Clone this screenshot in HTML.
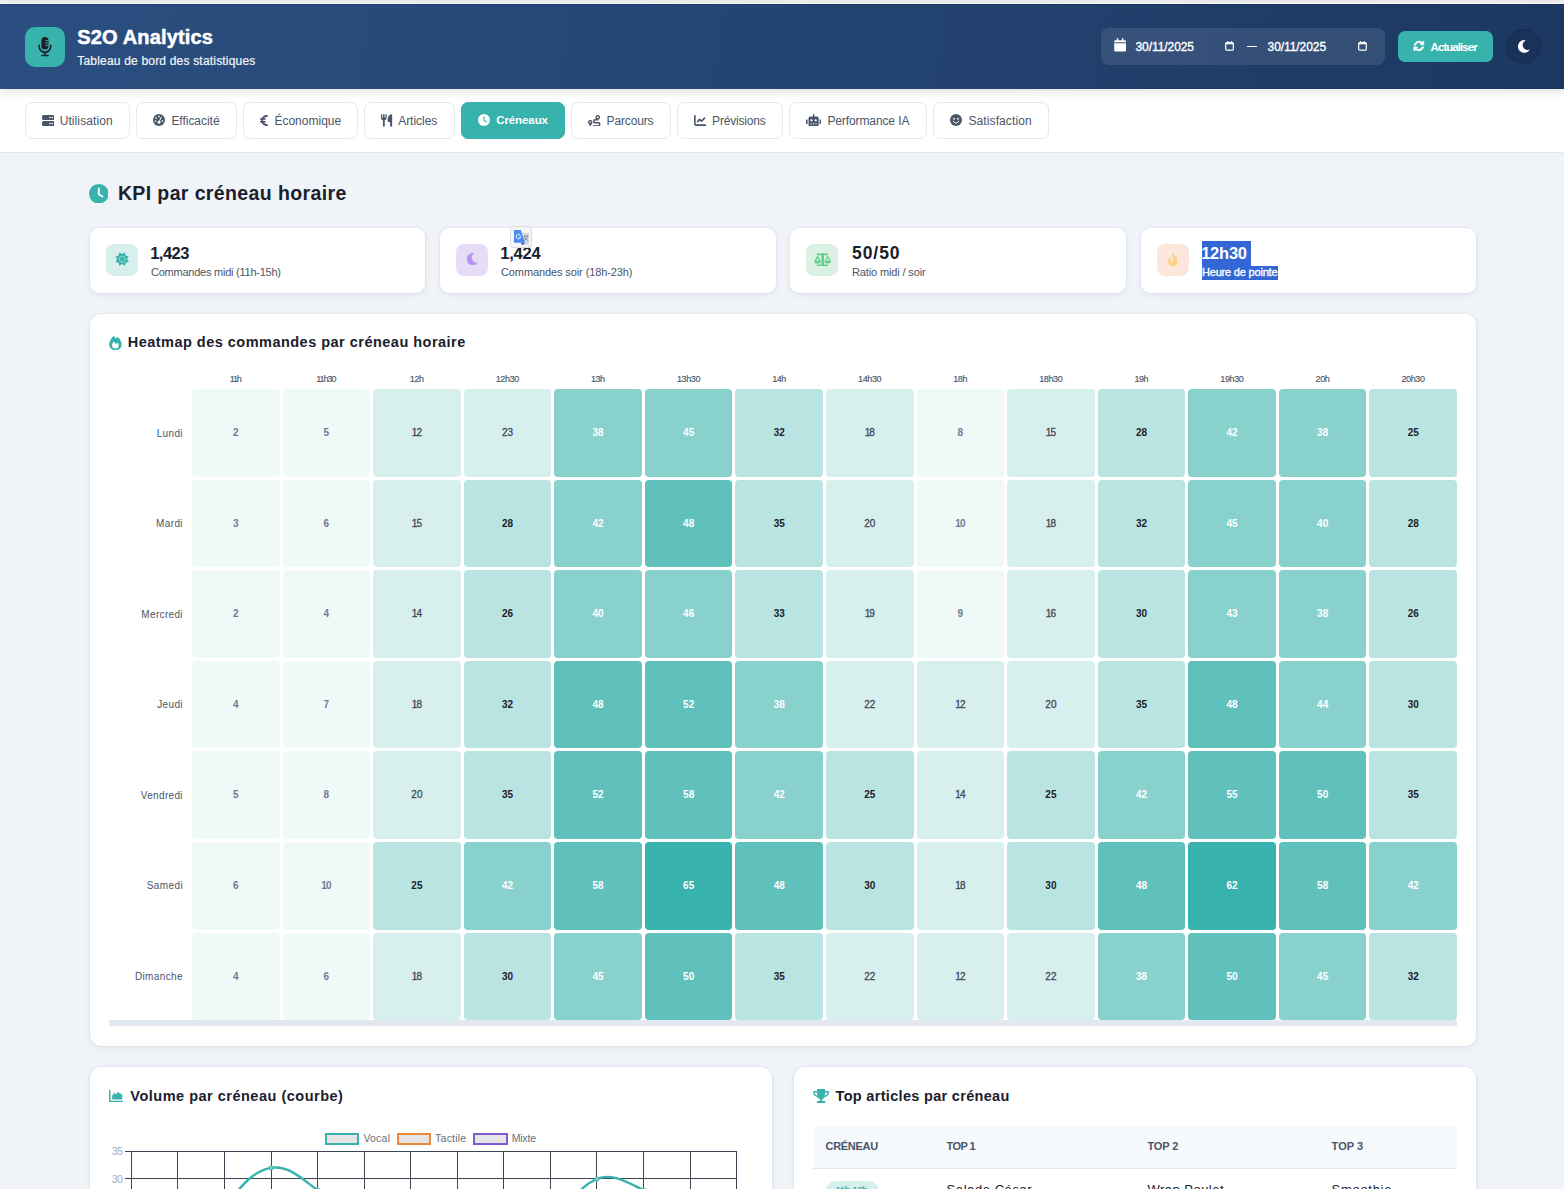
<!DOCTYPE html>
<html lang="fr">
<head>
<meta charset="utf-8">
<title>S2O Analytics</title>
<style>
*{box-sizing:border-box;margin:0;padding:0}
html,body{width:1564px;height:1189px;overflow:hidden}
body{font-family:"Liberation Sans",sans-serif;background:#f0f4f8;color:#1a202c;position:relative}
.abs{position:absolute}
.t{position:absolute;white-space:nowrap;line-height:1}
#topstrip{left:0;top:0;width:1564px;height:4px;background:linear-gradient(#ebebeb 0%,#f3f3f3 50%,#ffffff 88%)}
#header{left:0;top:4px;width:1564px;height:85px;border-top:1px solid rgba(10,20,60,.18);background:linear-gradient(100deg,#2b4f80 0%,#264878 35%,#1c3862 100%);box-shadow:0 2px 10px rgba(0,0,0,.14)}
#nav{left:0;top:89px;width:1564px;height:64px;background:#fff;border-bottom:1px solid #e2e8f0}
.logo{left:25px;top:27px;width:40px;height:40px;border-radius:10px;background:#38b2ac}
.nb{position:absolute;top:102px;height:37px;border:1px solid #e2e8f0;border-radius:7px;background:#fff}
.nb.act{background:#38b2ac;border-color:#38b2ac}
.card{position:absolute;background:#fff;border-radius:11px;box-shadow:0 2px 6px rgba(30,50,90,.07),0 0 0 1px rgba(214,222,236,.38)}
.ic{position:absolute;width:32px;height:32px;border-radius:8px}
</style>
</head>
<body>
<div id="topstrip" class="abs"></div>
<div id="nav" class="abs"></div>
<div id="header" class="abs"></div>
<div class="abs logo"></div>
<div class="t" style="left:77.30px;top:27.13px;font-size:20px;font-weight:700;color:#ffffff;letter-spacing:0.145px;-webkit-text-stroke:0.5px #fff;">S2O Analytics</div>
<div class="t" style="left:77.30px;top:55.44px;font-size:12px;font-weight:400;color:#f1f5f9;letter-spacing:0.190px;-webkit-text-stroke:0.2px #f1f5f9;">Tableau de bord des statistiques</div>
<svg class="abs" style="left:37.6px;top:37px" width="14" height="20" viewBox="0 0 14 20"><rect x="3.400" y="0.100" width="7.100" height="12.400" rx="3.550" fill="#1a202c"/><path d="M1.200 8.200v1.400a5.750 5.750 0 0 0 11.500 0V8.200" fill="none" stroke="#1a202c" stroke-width="1.600" stroke-linecap="round"/><path d="M6.950 15.500v3M3.900 18.600h6.200" stroke="#1a202c" stroke-width="1.500" stroke-linecap="round"/><path d="M7.200 3.700h3.300M7.200 6h3.300M7.200 8.300h3.300" stroke="#38b2ac" stroke-width="0.900"/></svg>
<div class="abs" style="left:1101px;top:28px;width:284px;height:37px;border-radius:8px;background:rgba(255,255,255,.10)"></div>
<svg class="abs" style="left:1113.9px;top:38.200px" width="12.200" height="13.600" viewBox="0 0 13 14.5"><path d="M3 0.3h1.6v2H8.4v-2H10v2h1.4a1.4 1.4 0 0 1 1.4 1.4V13a1.4 1.4 0 0 1-1.4 1.4H1.6A1.4 1.4 0 0 1 .2 13V3.7A1.4 1.4 0 0 1 1.6 2.3H3z" fill="#fff"/><rect x="0.2" y="4.6" width="12.6" height="1" fill="#354f78"/></svg>
<div class="t" style="left:1135.50px;top:40.84px;font-size:12px;font-weight:400;color:#ffffff;letter-spacing:-0.074px;-webkit-text-stroke:0.35px #fff;">30/11/2025</div>
<div class="t" style="left:1267.60px;top:40.84px;font-size:12px;font-weight:400;color:#ffffff;letter-spacing:-0.074px;-webkit-text-stroke:0.35px #fff;">30/11/2025</div>
<svg class="abs" style="left:1225px;top:41.200px" width="9" height="10" viewBox="0 0 9 10"><rect x="0.7" y="1.6" width="7.6" height="7.6" rx="1" fill="none" stroke="#fff" stroke-width="1.2"/><rect x="0.7" y="1.6" width="7.6" height="1.700" fill="#fff"/><rect x="2" y="0.2" width="1.2" height="2" fill="#fff"/><rect x="5.8" y="0.2" width="1.2" height="2" fill="#fff"/></svg>
<svg class="abs" style="left:1357.5px;top:41.200px" width="9" height="10" viewBox="0 0 9 10"><rect x="0.7" y="1.6" width="7.6" height="7.6" rx="1" fill="none" stroke="#fff" stroke-width="1.2"/><rect x="0.7" y="1.6" width="7.6" height="1.700" fill="#fff"/><rect x="2" y="0.2" width="1.2" height="2" fill="#fff"/><rect x="5.8" y="0.2" width="1.2" height="2" fill="#fff"/></svg>
<div class="abs" style="left:1246.5px;top:46px;width:10.5px;height:1.2px;background:#fff"></div>
<div class="abs" style="left:1398px;top:31px;width:95px;height:31px;border-radius:7px;background:#38b2ac"></div>
<svg class="abs" style="left:1412.8px;top:40px" width="12" height="12" viewBox="-20 -20 552 552"><path fill="#fff" stroke="#fff" stroke-width="34" stroke-linejoin="round" d="M105 203C135 118 226 73 311 103c30 11 55 29 74 53l-49 0c-13 0-24 11-24 24s11 24 24 24H456c13 0 24-11 24-24V56c0-13-11-24-24-24s-24 11-24 24v62C406 88 372 63 332 49 213 7 82 70 40 189c-6 17 3 35 19 41s35-3 41-19zM39 289c-4 1-8 3-11 7s-6 8-7 12c-.3 1-.5 2-.7 4-.3 2-.5 4-.5 6V456c0 13 11 24 24 24s24-11 24-24V394c26 30 60 55 100 69 119 42 250-21 292-140 6-17-3-35-19-41s-35 3-41 19c-30 85-121 130-206 100-30-11-55-29-74-53h48c13 0 24-11 24-24s-11-24-24-24H48c-3 0-6 .4-9 1z"/></svg>
<div class="t" style="left:1430.60px;top:41.68px;font-size:11.5px;font-weight:700;color:#ffffff;letter-spacing:-0.945px;">Actualiser</div>
<div class="abs" style="left:1506px;top:29px;width:35px;height:35px;border-radius:50%;background:#1a3158;border:1px solid #172d4f"></div>
<svg class="abs" style="left:1517.5px;top:40px" width="12" height="13" viewBox="0 0 12 13"><path d="M7.800 0.200A6.400 6.400 0 1 0 11.900 9.600 4.800 4.800 0 0 1 7.800 0.200z" fill="#fff"/></svg>
<div class="nb" style="left:25px;width:104.5px"></div>
<div class="t" style="left:59.70px;top:115.14px;font-size:12px;font-weight:400;color:#4a5568;letter-spacing:0.088px;">Utilisation</div>
<div class="nb" style="left:136.2px;width:100.5px"></div>
<div class="t" style="left:171.40px;top:115.14px;font-size:12px;font-weight:400;color:#4a5568;letter-spacing:-0.030px;">Efficacité</div>
<div class="nb" style="left:243.4px;width:114.6px"></div>
<div class="t" style="left:274.40px;top:115.14px;font-size:12px;font-weight:400;color:#4a5568;letter-spacing:0.010px;">Économique</div>
<div class="nb" style="left:364px;width:91px"></div>
<div class="t" style="left:398.20px;top:115.14px;font-size:12px;font-weight:400;color:#4a5568;letter-spacing:-0.034px;">Articles</div>
<div class="nb act" style="left:461px;width:104px"></div>
<div class="t" style="left:496.20px;top:115.38px;font-size:11.5px;font-weight:700;color:#ffffff;letter-spacing:-0.088px;">Créneaux</div>
<div class="nb" style="left:571px;width:99.5px"></div>
<div class="t" style="left:606.60px;top:115.14px;font-size:12px;font-weight:400;color:#4a5568;letter-spacing:-0.160px;">Parcours</div>
<div class="nb" style="left:677.2px;width:105.5px"></div>
<div class="t" style="left:712.10px;top:115.14px;font-size:12px;font-weight:400;color:#4a5568;letter-spacing:-0.184px;">Prévisions</div>
<div class="nb" style="left:789.2px;width:137.39999999999998px"></div>
<div class="t" style="left:827.40px;top:115.14px;font-size:12px;font-weight:400;color:#4a5568;letter-spacing:-0.105px;">Performance IA</div>
<div class="nb" style="left:933.3px;width:115.5px"></div>
<div class="t" style="left:968.50px;top:115.14px;font-size:12px;font-weight:400;color:#4a5568;letter-spacing:0.097px;">Satisfaction</div>
<svg class="abs" style="left:41.5px;top:115px" width="12.5" height="11" viewBox="0 0 25 22" preserveAspectRatio="none"><rect x="0" y="0" width="25" height="10" rx="3" fill="#4a5568"/><rect x="0" y="12" width="25" height="10" rx="3" fill="#4a5568"/><circle cx="16" cy="5" r="1.6" fill="#fff"/><circle cx="20.5" cy="5" r="1.6" fill="#fff"/><circle cx="16" cy="17" r="1.6" fill="#fff"/><circle cx="20.5" cy="17" r="1.6" fill="#fff"/></svg>
<svg class="abs" style="left:153.2px;top:114.4px" width="12" height="12" viewBox="0 0 24 24" preserveAspectRatio="none"><circle cx="12" cy="12" r="12" fill="#4a5568"/><circle cx="12" cy="5" r="1.7" fill="#fff"/><circle cx="6" cy="8" r="1.7" fill="#fff"/><circle cx="5" cy="14" r="1.7" fill="#fff"/><circle cx="19" cy="14" r="1.7" fill="#fff"/><path d="M16.5 6.5L12.5 15" stroke="#fff" stroke-width="2" stroke-linecap="round"/><circle cx="12" cy="16.5" r="3" fill="#fff"/></svg>
<svg class="abs" style="left:260.2px;top:115px" width="8" height="11" viewBox="0 0 16 22" preserveAspectRatio="none"><path d="M15.500 2.300A9.200 9.200 0 0 0 4.200 11 9.200 9.200 0 0 0 15.500 19.700" fill="none" stroke="#4a5568" stroke-width="3.800"/><path d="M0 8.200h11.500M0 13.600h11.500" stroke="#4a5568" stroke-width="3"/></svg>
<svg class="abs" style="left:381.2px;top:114.2px" width="11.4" height="12.5" viewBox="0 0 22.8 25" preserveAspectRatio="none"><path d="M0 0.500v7.500a4.500 4.500 0 0 0 3.900 4.400V25h3.600V12.400A4.500 4.500 0 0 0 11.400 8V0.500H9V7H7.200V0.500H4.200V7H2.400V0.500z" fill="#4a5568"/><path d="M22.300 0.300c-5 0-8.800 4-8.800 9.500v6h4.800v9.200h4z" fill="#4a5568"/></svg>
<svg class="abs" style="left:478px;top:114.4px" width="12" height="12" viewBox="0 0 24 24" preserveAspectRatio="none"><circle cx="12" cy="12" r="12" fill="#fff"/><path d="M12 5.500V12.500L16.500 15.500" fill="none" stroke="#38b2ac" stroke-width="2.400" stroke-linecap="round"/></svg>
<svg class="abs" style="left:588.2px;top:114.8px" width="12.5" height="11.5" viewBox="0 0 25 23" preserveAspectRatio="none"><circle cx="4.500" cy="14.500" r="4.300" fill="#4a5568"/><path d="M4.500 23L0.800 16.500h7.400z" fill="#4a5568"/><circle cx="4.500" cy="14.500" r="1.600" fill="#fff"/><circle cx="19.500" cy="4.600" r="3.300" fill="none" stroke="#4a5568" stroke-width="2.800"/><path d="M19.500 9.500H14.500a3.100 3.100 0 0 0 0 6.200h6a3.100 3.100 0 0 1 0 6.200H11" fill="none" stroke="#4a5568" stroke-width="3" stroke-linecap="round"/></svg>
<svg class="abs" style="left:694.2px;top:115px" width="12" height="11" viewBox="0 0 24 22" preserveAspectRatio="none"><path d="M1.700 1.200v16.800a2.300 2.300 0 0 0 2.300 2.300H22.800" fill="none" stroke="#4a5568" stroke-width="3.200" stroke-linecap="round"/><path d="M7 13.500L11.200 8.800l3.800 3.600L21 6.200" fill="none" stroke="#4a5568" stroke-width="3.200" stroke-linecap="round" stroke-linejoin="round"/></svg>
<svg class="abs" style="left:806.2px;top:113.6px" width="15.2" height="12.6" viewBox="0 0 30 25" preserveAspectRatio="none"><rect x="13.800" y="0" width="2.600" height="6" fill="#4a5568"/><rect x="5" y="5" width="20" height="19.500" rx="3.500" fill="#4a5568"/><rect x="0" y="11" width="3.200" height="9" rx="1" fill="#4a5568"/><rect x="26.800" y="11" width="3.200" height="9" rx="1" fill="#4a5568"/><circle cx="10.800" cy="12.500" r="2.300" fill="#fff"/><circle cx="19.200" cy="12.500" r="2.300" fill="#fff"/><rect x="9" y="18.500" width="2.600" height="2" fill="#fff"/><rect x="13.700" y="18.500" width="2.600" height="2" fill="#fff"/><rect x="18.400" y="18.500" width="2.600" height="2" fill="#fff"/></svg>
<svg class="abs" style="left:950.3px;top:114.4px" width="12" height="12" viewBox="0 0 24 24" preserveAspectRatio="none"><circle cx="12" cy="12" r="12" fill="#4a5568"/><circle cx="8.200" cy="9.500" r="1.800" fill="#fff"/><circle cx="15.800" cy="9.500" r="1.800" fill="#fff"/><path d="M6.500 14.500a6 6 0 0 0 11 0" fill="none" stroke="#fff" stroke-width="1.800" stroke-linecap="round"/></svg>
<svg class="abs" style="left:88.6px;top:183.8px" width="19.6" height="19.6" viewBox="0 0 24 24" preserveAspectRatio="none"><circle cx="12" cy="12" r="12" fill="#38b2ac"/><path d="M12 5.500V12.500L16.500 15.300" fill="none" stroke="#fff" stroke-width="2.300" stroke-linecap="round"/></svg>
<div class="t" style="left:117.90px;top:183.67px;font-size:19.5px;font-weight:700;color:#1a202c;letter-spacing:0.382px;">KPI par créneau horaire</div>
<div class="card" style="left:90px;top:228px;width:335.3px;height:65px;border-radius:9px"></div>
<div class="card" style="left:440px;top:228px;width:336px;height:65px;border-radius:9px"></div>
<div class="card" style="left:790px;top:228px;width:336px;height:65px;border-radius:9px"></div>
<div class="card" style="left:1141px;top:228px;width:335.29999999999995px;height:65px;border-radius:9px"></div>
<div class="ic" style="left:106.2px;top:244px;background:#d7f0ee"></div>
<div class="ic" style="left:456.2px;top:244px;background:#e6dcf6"></div>
<div class="ic" style="left:806.2px;top:244px;background:#dbf1e4"></div>
<div class="ic" style="left:1157px;top:244px;background:#fce8da"></div>
<svg class="abs" style="left:114.85px;top:252.3px" width="14.2" height="14.2" viewBox="0 0 14.2 14.2" preserveAspectRatio="none"><polygon points="13.66,9.82 10.64,10.64 9.82,13.66 7.10,12.10 4.38,13.66 3.56,10.64 0.54,9.82 2.10,7.10 0.54,4.38 3.56,3.56 4.38,0.54 7.10,2.10 9.82,0.54 10.64,3.56 13.66,4.38 12.10,7.10" fill="#38b2ac"/><circle cx="7.100" cy="7.100" r="3.050" fill="#38b2ac" stroke="#c4ebe7" stroke-width="0.650"/></svg>
<svg class="abs" style="left:467px;top:253px" width="11" height="12.4" viewBox="0 0 11 12.4" preserveAspectRatio="none"><path d="M7.300 0.200A6.100 6.100 0 1 0 10.800 9.600 5.100 5.100 0 0 1 7.300 0.200z" fill="#b794f4"/></svg>
<svg class="abs" style="left:814.1px;top:252.6px" width="17.2" height="13.6" viewBox="0 0 17.2 13.6" preserveAspectRatio="none"><rect x="2.700" y="0.400" width="11.500" height="1.800" rx="0.500" fill="#62d08a"/><rect x="7.400" y="0" width="2.600" height="12" rx="0.600" fill="#62d08a"/><rect x="2.700" y="11.400" width="11.500" height="1.900" rx="0.600" fill="#62d08a"/><path d="M3.500 3.600L0.900 8.300h5.200z" fill="none" stroke="#62d08a" stroke-width="1.300" stroke-linejoin="round"/><path d="M13.700 3.600L11.100 8.300h5.200z" fill="none" stroke="#62d08a" stroke-width="1.300" stroke-linejoin="round"/><path d="M0.200 8.200h6.600a3.300 2.300 0 0 1-6.600 0z" fill="#62d08a"/><path d="M10.400 8.200h6.600a3.300 2.300 0 0 1-6.600 0z" fill="#62d08a"/></svg>
<svg class="abs" style="left:1167.7px;top:252.6px" width="9.8" height="13.6" viewBox="0 0 9.8 13.6" preserveAspectRatio="none"><path d="M4.700 0C6.300 2.400 9.800 4.800 9.800 8.600A4.900 5 0 0 1 0 8.600C0 6.800 0.800 5.200 1.900 4.100 2.300 5.200 2.400 7 3.200 8.100 3.700 8.900 4.800 8.800 5.200 8 5.600 7.100 5.300 6.300 4.800 5.300 4 3.700 3.300 2.300 4.700 0z" fill="#fbd38d"/></svg>
<div class="t" style="left:150.20px;top:245.14px;font-size:16.5px;font-weight:700;color:#1a202c;letter-spacing:-0.523px;">1,423</div>
<div class="t" style="left:151.00px;top:267.43px;font-size:11px;font-weight:400;color:#4a5568;letter-spacing:-0.240px;">Commandes midi (11h-15h)</div>
<div class="t" style="left:500.20px;top:245.14px;font-size:16.5px;font-weight:700;color:#1a202c;letter-spacing:-0.173px;">1,424</div>
<div class="t" style="left:501.00px;top:267.43px;font-size:11px;font-weight:400;color:#4a5568;letter-spacing:-0.104px;">Commandes soir (18h-23h)</div>
<div class="t" style="left:852.00px;top:244.65px;font-size:17.5px;font-weight:700;color:#1a202c;letter-spacing:0.952px;">50/50</div>
<div class="t" style="left:852.00px;top:267.43px;font-size:11px;font-weight:400;color:#4a5568;letter-spacing:-0.131px;">Ratio midi / soir</div>
<div class="abs" style="left:1202px;top:241.2px;width:48.8px;height:24.8px;background:#3367d6"></div>
<div class="abs" style="left:1202px;top:266px;width:76px;height:13.900px;background:#3367d6"></div>
<div class="t" style="left:1201.20px;top:245.14px;font-size:16.5px;font-weight:700;color:#ffffff;letter-spacing:-0.246px;">12h30</div>
<div class="t" style="left:1202.00px;top:267.43px;font-size:11px;font-weight:400;color:#ffffff;letter-spacing:-0.191px;-webkit-text-stroke:0.35px #fff;">Heure de pointe</div>
<div class="abs" style="left:510px;top:226px;width:21.800px;height:21.600px;background:#f6f6f6;border:1px solid #dcdcdc;border-radius:3.500px"></div>
<svg class="abs" style="left:514px;top:229.9px" width="15" height="15.2" viewBox="0 0 15 15.2" preserveAspectRatio="none"><rect x="8.600" y="2.800" width="6.300" height="12" fill="#d5d7d9"/><path d="M9.800 6.200h4.500M12 5.200v1M10.300 6.200c.6 2 2.300 3.600 4 4.400M13.800 6.200c-.6 2-2.300 3.600-4 4.400" stroke="#6f8793" stroke-width="0.800" fill="none"/><path d="M6.500 12.800h4.500l-2.400 2.400z" fill="#3b55c4"/><path d="M0.600 0h6.300l4.100 12.800H0.600a0.600 0.600 0 0 1-.6-.6V0.600a.6.6 0 0 1 .6-.6z" fill="#4b8bf5"/><path d="M6.500 5.400A2.300 2.300 0 1 0 6.800 7H4.600" fill="none" stroke="#fff" stroke-width="0.900"/></svg>
<div class="card" style="left:90px;top:314px;width:1386.3px;height:732px"></div>
<svg class="abs" style="left:108.9px;top:335.8px" width="12.8" height="14.3" viewBox="0 0 12.8 14.3" preserveAspectRatio="none"><path d="M4.700 0C5.600 0.900 6.300 1.700 7 2.600 7.600 2 8.300 1.500 8.900 1.100 10.800 3 12.700 5.800 12.700 8.200A6.300 6.100 0 0 1 0.100 8.200C0.100 5.300 2.300 2.200 4.700 0z" fill="#38b2ac"/><path d="M4.700 5.400C5.500 6.200 6.300 7.200 7.100 8.200L8.600 6.600C9.300 7.500 9.700 8.500 9.700 9.300A3.300 3.300 0 0 1 3.100 9.300C3.100 8 3.800 6.500 4.700 5.400z" fill="#fff"/></svg>
<div class="t" style="left:127.70px;top:335.32px;font-size:14.5px;font-weight:700;color:#1a202c;letter-spacing:0.482px;">Heatmap des commandes par créneau horaire</div>
<div class="t" style="left:229.76px;top:374.80px;font-size:9px;font-weight:400;color:#4a5568;letter-spacing:-1.148px;-webkit-text-stroke:0.15px #4a5568;">11h</div>
<div class="t" style="left:316.13px;top:374.80px;font-size:9px;font-weight:400;color:#4a5568;letter-spacing:-0.974px;-webkit-text-stroke:0.15px #4a5568;">11h30</div>
<div class="t" style="left:409.87px;top:374.80px;font-size:9px;font-weight:400;color:#4a5568;letter-spacing:-0.450px;-webkit-text-stroke:0.15px #4a5568;">12h</div>
<div class="t" style="left:495.74px;top:374.80px;font-size:9px;font-weight:400;color:#4a5568;letter-spacing:-0.375px;-webkit-text-stroke:0.15px #4a5568;">12h30</div>
<div class="t" style="left:591.01px;top:374.80px;font-size:9px;font-weight:400;color:#4a5568;letter-spacing:-0.450px;-webkit-text-stroke:0.15px #4a5568;">13h</div>
<div class="t" style="left:676.88px;top:374.80px;font-size:9px;font-weight:400;color:#4a5568;letter-spacing:-0.375px;-webkit-text-stroke:0.15px #4a5568;">13h30</div>
<div class="t" style="left:772.15px;top:374.80px;font-size:9px;font-weight:400;color:#4a5568;letter-spacing:-0.450px;-webkit-text-stroke:0.15px #4a5568;">14h</div>
<div class="t" style="left:858.02px;top:374.80px;font-size:9px;font-weight:400;color:#4a5568;letter-spacing:-0.375px;-webkit-text-stroke:0.15px #4a5568;">14h30</div>
<div class="t" style="left:953.30px;top:374.80px;font-size:9px;font-weight:400;color:#4a5568;letter-spacing:-0.450px;-webkit-text-stroke:0.15px #4a5568;">18h</div>
<div class="t" style="left:1039.16px;top:374.80px;font-size:9px;font-weight:400;color:#4a5568;letter-spacing:-0.375px;-webkit-text-stroke:0.15px #4a5568;">18h30</div>
<div class="t" style="left:1134.44px;top:374.80px;font-size:9px;font-weight:400;color:#4a5568;letter-spacing:-0.450px;-webkit-text-stroke:0.15px #4a5568;">19h</div>
<div class="t" style="left:1220.30px;top:374.80px;font-size:9px;font-weight:400;color:#4a5568;letter-spacing:-0.375px;-webkit-text-stroke:0.15px #4a5568;">19h30</div>
<div class="t" style="left:1315.58px;top:374.80px;font-size:9px;font-weight:400;color:#4a5568;letter-spacing:-0.450px;-webkit-text-stroke:0.15px #4a5568;">20h</div>
<div class="t" style="left:1401.45px;top:374.80px;font-size:9px;font-weight:400;color:#4a5568;letter-spacing:-0.375px;-webkit-text-stroke:0.15px #4a5568;">20h30</div>
<div class="t" style="left:156.66px;top:428.50px;font-size:10px;font-weight:400;color:#4a5568;letter-spacing:0.367px;">Lundi</div>
<div class="abs" style="left:192.00px;top:389.20px;width:87.57px;height:87.57px;border-radius:4px;background:#eff9f8"></div>
<div class="t" style="left:233.00px;top:428.20px;font-size:10px;font-weight:700;color:#6e7b91;">2</div>
<div class="abs" style="left:282.57px;top:389.20px;width:87.57px;height:87.57px;border-radius:4px;background:#eff9f8"></div>
<div class="t" style="left:323.58px;top:428.20px;font-size:10px;font-weight:700;color:#6e7b91;">5</div>
<div class="abs" style="left:373.14px;top:389.20px;width:87.57px;height:87.57px;border-radius:4px;background:#d7f0ee"></div>
<div class="t" style="left:411.81px;top:428.20px;font-size:10px;font-weight:400;color:#3f4a5a;letter-spacing:-0.890px;-webkit-text-stroke:0.3px #3f4a5a;">12</div>
<div class="abs" style="left:463.71px;top:389.20px;width:87.57px;height:87.57px;border-radius:4px;background:#d7f0ee"></div>
<div class="t" style="left:501.94px;top:428.20px;font-size:10px;font-weight:400;color:#3f4a5a;-webkit-text-stroke:0.3px #3f4a5a;">23</div>
<div class="abs" style="left:554.28px;top:389.20px;width:87.57px;height:87.57px;border-radius:4px;background:#88d1cd"></div>
<div class="t" style="left:592.51px;top:428.20px;font-size:10px;font-weight:700;color:#ffffff;">38</div>
<div class="abs" style="left:644.86px;top:389.20px;width:87.57px;height:87.57px;border-radius:4px;background:#88d1cd"></div>
<div class="t" style="left:683.08px;top:428.20px;font-size:10px;font-weight:700;color:#ffffff;">45</div>
<div class="abs" style="left:735.43px;top:389.20px;width:87.57px;height:87.57px;border-radius:4px;background:#bae4e1"></div>
<div class="t" style="left:773.65px;top:428.20px;font-size:10px;font-weight:700;color:#1a202c;">32</div>
<div class="abs" style="left:826.00px;top:389.20px;width:87.57px;height:87.57px;border-radius:4px;background:#d7f0ee"></div>
<div class="t" style="left:864.67px;top:428.20px;font-size:10px;font-weight:400;color:#3f4a5a;letter-spacing:-0.890px;-webkit-text-stroke:0.3px #3f4a5a;">18</div>
<div class="abs" style="left:916.57px;top:389.20px;width:87.57px;height:87.57px;border-radius:4px;background:#eff9f8"></div>
<div class="t" style="left:957.57px;top:428.20px;font-size:10px;font-weight:700;color:#6e7b91;">8</div>
<div class="abs" style="left:1007.14px;top:389.20px;width:87.57px;height:87.57px;border-radius:4px;background:#d7f0ee"></div>
<div class="t" style="left:1045.81px;top:428.20px;font-size:10px;font-weight:400;color:#3f4a5a;letter-spacing:-0.890px;-webkit-text-stroke:0.3px #3f4a5a;">15</div>
<div class="abs" style="left:1097.71px;top:389.20px;width:87.57px;height:87.57px;border-radius:4px;background:#bae4e1"></div>
<div class="t" style="left:1135.93px;top:428.20px;font-size:10px;font-weight:700;color:#1a202c;">28</div>
<div class="abs" style="left:1188.28px;top:389.20px;width:87.57px;height:87.57px;border-radius:4px;background:#88d1cd"></div>
<div class="t" style="left:1226.50px;top:428.20px;font-size:10px;font-weight:700;color:#ffffff;">42</div>
<div class="abs" style="left:1278.85px;top:389.20px;width:87.57px;height:87.57px;border-radius:4px;background:#88d1cd"></div>
<div class="t" style="left:1317.08px;top:428.20px;font-size:10px;font-weight:700;color:#ffffff;">38</div>
<div class="abs" style="left:1369.42px;top:389.20px;width:87.57px;height:87.57px;border-radius:4px;background:#bae4e1"></div>
<div class="t" style="left:1407.65px;top:428.20px;font-size:10px;font-weight:700;color:#1a202c;">25</div>
<div class="t" style="left:156.09px;top:519.07px;font-size:10px;font-weight:400;color:#4a5568;letter-spacing:0.375px;">Mardi</div>
<div class="abs" style="left:192.00px;top:479.77px;width:87.57px;height:87.57px;border-radius:4px;background:#eff9f8"></div>
<div class="t" style="left:233.00px;top:518.77px;font-size:10px;font-weight:700;color:#6e7b91;">3</div>
<div class="abs" style="left:282.57px;top:479.77px;width:87.57px;height:87.57px;border-radius:4px;background:#eff9f8"></div>
<div class="t" style="left:323.58px;top:518.77px;font-size:10px;font-weight:700;color:#6e7b91;">6</div>
<div class="abs" style="left:373.14px;top:479.77px;width:87.57px;height:87.57px;border-radius:4px;background:#d7f0ee"></div>
<div class="t" style="left:411.81px;top:518.77px;font-size:10px;font-weight:400;color:#3f4a5a;letter-spacing:-0.890px;-webkit-text-stroke:0.3px #3f4a5a;">15</div>
<div class="abs" style="left:463.71px;top:479.77px;width:87.57px;height:87.57px;border-radius:4px;background:#bae4e1"></div>
<div class="t" style="left:501.94px;top:518.77px;font-size:10px;font-weight:700;color:#1a202c;">28</div>
<div class="abs" style="left:554.28px;top:479.77px;width:87.57px;height:87.57px;border-radius:4px;background:#88d1cd"></div>
<div class="t" style="left:592.51px;top:518.77px;font-size:10px;font-weight:700;color:#ffffff;">42</div>
<div class="abs" style="left:644.86px;top:479.77px;width:87.57px;height:87.57px;border-radius:4px;background:#60c1bc"></div>
<div class="t" style="left:683.08px;top:518.77px;font-size:10px;font-weight:700;color:#ffffff;">48</div>
<div class="abs" style="left:735.43px;top:479.77px;width:87.57px;height:87.57px;border-radius:4px;background:#bae4e1"></div>
<div class="t" style="left:773.65px;top:518.77px;font-size:10px;font-weight:700;color:#1a202c;">35</div>
<div class="abs" style="left:826.00px;top:479.77px;width:87.57px;height:87.57px;border-radius:4px;background:#d7f0ee"></div>
<div class="t" style="left:864.22px;top:518.77px;font-size:10px;font-weight:400;color:#3f4a5a;-webkit-text-stroke:0.3px #3f4a5a;">20</div>
<div class="abs" style="left:916.57px;top:479.77px;width:87.57px;height:87.57px;border-radius:4px;background:#eff9f8"></div>
<div class="t" style="left:955.24px;top:518.77px;font-size:10px;font-weight:700;color:#6e7b91;letter-spacing:-0.890px;">10</div>
<div class="abs" style="left:1007.14px;top:479.77px;width:87.57px;height:87.57px;border-radius:4px;background:#d7f0ee"></div>
<div class="t" style="left:1045.81px;top:518.77px;font-size:10px;font-weight:400;color:#3f4a5a;letter-spacing:-0.890px;-webkit-text-stroke:0.3px #3f4a5a;">18</div>
<div class="abs" style="left:1097.71px;top:479.77px;width:87.57px;height:87.57px;border-radius:4px;background:#bae4e1"></div>
<div class="t" style="left:1135.93px;top:518.77px;font-size:10px;font-weight:700;color:#1a202c;">32</div>
<div class="abs" style="left:1188.28px;top:479.77px;width:87.57px;height:87.57px;border-radius:4px;background:#88d1cd"></div>
<div class="t" style="left:1226.50px;top:518.77px;font-size:10px;font-weight:700;color:#ffffff;">45</div>
<div class="abs" style="left:1278.85px;top:479.77px;width:87.57px;height:87.57px;border-radius:4px;background:#88d1cd"></div>
<div class="t" style="left:1317.08px;top:518.77px;font-size:10px;font-weight:700;color:#ffffff;">40</div>
<div class="abs" style="left:1369.42px;top:479.77px;width:87.57px;height:87.57px;border-radius:4px;background:#bae4e1"></div>
<div class="t" style="left:1407.65px;top:518.77px;font-size:10px;font-weight:700;color:#1a202c;">28</div>
<div class="t" style="left:141.37px;top:609.64px;font-size:10px;font-weight:400;color:#4a5568;letter-spacing:0.333px;">Mercredi</div>
<div class="abs" style="left:192.00px;top:570.34px;width:87.57px;height:87.57px;border-radius:4px;background:#eff9f8"></div>
<div class="t" style="left:233.00px;top:609.34px;font-size:10px;font-weight:700;color:#6e7b91;">2</div>
<div class="abs" style="left:282.57px;top:570.34px;width:87.57px;height:87.57px;border-radius:4px;background:#eff9f8"></div>
<div class="t" style="left:323.58px;top:609.34px;font-size:10px;font-weight:700;color:#6e7b91;">4</div>
<div class="abs" style="left:373.14px;top:570.34px;width:87.57px;height:87.57px;border-radius:4px;background:#d7f0ee"></div>
<div class="t" style="left:411.81px;top:609.34px;font-size:10px;font-weight:400;color:#3f4a5a;letter-spacing:-0.890px;-webkit-text-stroke:0.3px #3f4a5a;">14</div>
<div class="abs" style="left:463.71px;top:570.34px;width:87.57px;height:87.57px;border-radius:4px;background:#bae4e1"></div>
<div class="t" style="left:501.94px;top:609.34px;font-size:10px;font-weight:700;color:#1a202c;">26</div>
<div class="abs" style="left:554.28px;top:570.34px;width:87.57px;height:87.57px;border-radius:4px;background:#88d1cd"></div>
<div class="t" style="left:592.51px;top:609.34px;font-size:10px;font-weight:700;color:#ffffff;">40</div>
<div class="abs" style="left:644.86px;top:570.34px;width:87.57px;height:87.57px;border-radius:4px;background:#88d1cd"></div>
<div class="t" style="left:683.08px;top:609.34px;font-size:10px;font-weight:700;color:#ffffff;">46</div>
<div class="abs" style="left:735.43px;top:570.34px;width:87.57px;height:87.57px;border-radius:4px;background:#bae4e1"></div>
<div class="t" style="left:773.65px;top:609.34px;font-size:10px;font-weight:700;color:#1a202c;">33</div>
<div class="abs" style="left:826.00px;top:570.34px;width:87.57px;height:87.57px;border-radius:4px;background:#d7f0ee"></div>
<div class="t" style="left:864.67px;top:609.34px;font-size:10px;font-weight:400;color:#3f4a5a;letter-spacing:-0.890px;-webkit-text-stroke:0.3px #3f4a5a;">19</div>
<div class="abs" style="left:916.57px;top:570.34px;width:87.57px;height:87.57px;border-radius:4px;background:#eff9f8"></div>
<div class="t" style="left:957.57px;top:609.34px;font-size:10px;font-weight:700;color:#6e7b91;">9</div>
<div class="abs" style="left:1007.14px;top:570.34px;width:87.57px;height:87.57px;border-radius:4px;background:#d7f0ee"></div>
<div class="t" style="left:1045.81px;top:609.34px;font-size:10px;font-weight:400;color:#3f4a5a;letter-spacing:-0.890px;-webkit-text-stroke:0.3px #3f4a5a;">16</div>
<div class="abs" style="left:1097.71px;top:570.34px;width:87.57px;height:87.57px;border-radius:4px;background:#bae4e1"></div>
<div class="t" style="left:1135.93px;top:609.34px;font-size:10px;font-weight:700;color:#1a202c;">30</div>
<div class="abs" style="left:1188.28px;top:570.34px;width:87.57px;height:87.57px;border-radius:4px;background:#88d1cd"></div>
<div class="t" style="left:1226.50px;top:609.34px;font-size:10px;font-weight:700;color:#ffffff;">43</div>
<div class="abs" style="left:1278.85px;top:570.34px;width:87.57px;height:87.57px;border-radius:4px;background:#88d1cd"></div>
<div class="t" style="left:1317.08px;top:609.34px;font-size:10px;font-weight:700;color:#ffffff;">38</div>
<div class="abs" style="left:1369.42px;top:570.34px;width:87.57px;height:87.57px;border-radius:4px;background:#bae4e1"></div>
<div class="t" style="left:1407.65px;top:609.34px;font-size:10px;font-weight:700;color:#1a202c;">26</div>
<div class="t" style="left:157.26px;top:700.21px;font-size:10px;font-weight:400;color:#4a5568;letter-spacing:0.359px;">Jeudi</div>
<div class="abs" style="left:192.00px;top:660.91px;width:87.57px;height:87.57px;border-radius:4px;background:#eff9f8"></div>
<div class="t" style="left:233.00px;top:699.91px;font-size:10px;font-weight:700;color:#6e7b91;">4</div>
<div class="abs" style="left:282.57px;top:660.91px;width:87.57px;height:87.57px;border-radius:4px;background:#eff9f8"></div>
<div class="t" style="left:323.58px;top:699.91px;font-size:10px;font-weight:700;color:#6e7b91;">7</div>
<div class="abs" style="left:373.14px;top:660.91px;width:87.57px;height:87.57px;border-radius:4px;background:#d7f0ee"></div>
<div class="t" style="left:411.81px;top:699.91px;font-size:10px;font-weight:400;color:#3f4a5a;letter-spacing:-0.890px;-webkit-text-stroke:0.3px #3f4a5a;">18</div>
<div class="abs" style="left:463.71px;top:660.91px;width:87.57px;height:87.57px;border-radius:4px;background:#bae4e1"></div>
<div class="t" style="left:501.94px;top:699.91px;font-size:10px;font-weight:700;color:#1a202c;">32</div>
<div class="abs" style="left:554.28px;top:660.91px;width:87.57px;height:87.57px;border-radius:4px;background:#60c1bc"></div>
<div class="t" style="left:592.51px;top:699.91px;font-size:10px;font-weight:700;color:#ffffff;">48</div>
<div class="abs" style="left:644.86px;top:660.91px;width:87.57px;height:87.57px;border-radius:4px;background:#60c1bc"></div>
<div class="t" style="left:683.08px;top:699.91px;font-size:10px;font-weight:700;color:#ffffff;">52</div>
<div class="abs" style="left:735.43px;top:660.91px;width:87.57px;height:87.57px;border-radius:4px;background:#88d1cd"></div>
<div class="t" style="left:773.65px;top:699.91px;font-size:10px;font-weight:700;color:#ffffff;">38</div>
<div class="abs" style="left:826.00px;top:660.91px;width:87.57px;height:87.57px;border-radius:4px;background:#d7f0ee"></div>
<div class="t" style="left:864.22px;top:699.91px;font-size:10px;font-weight:400;color:#3f4a5a;-webkit-text-stroke:0.3px #3f4a5a;">22</div>
<div class="abs" style="left:916.57px;top:660.91px;width:87.57px;height:87.57px;border-radius:4px;background:#d7f0ee"></div>
<div class="t" style="left:955.24px;top:699.91px;font-size:10px;font-weight:400;color:#3f4a5a;letter-spacing:-0.890px;-webkit-text-stroke:0.3px #3f4a5a;">12</div>
<div class="abs" style="left:1007.14px;top:660.91px;width:87.57px;height:87.57px;border-radius:4px;background:#d7f0ee"></div>
<div class="t" style="left:1045.36px;top:699.91px;font-size:10px;font-weight:400;color:#3f4a5a;-webkit-text-stroke:0.3px #3f4a5a;">20</div>
<div class="abs" style="left:1097.71px;top:660.91px;width:87.57px;height:87.57px;border-radius:4px;background:#bae4e1"></div>
<div class="t" style="left:1135.93px;top:699.91px;font-size:10px;font-weight:700;color:#1a202c;">35</div>
<div class="abs" style="left:1188.28px;top:660.91px;width:87.57px;height:87.57px;border-radius:4px;background:#60c1bc"></div>
<div class="t" style="left:1226.50px;top:699.91px;font-size:10px;font-weight:700;color:#ffffff;">48</div>
<div class="abs" style="left:1278.85px;top:660.91px;width:87.57px;height:87.57px;border-radius:4px;background:#88d1cd"></div>
<div class="t" style="left:1317.08px;top:699.91px;font-size:10px;font-weight:700;color:#ffffff;">44</div>
<div class="abs" style="left:1369.42px;top:660.91px;width:87.57px;height:87.57px;border-radius:4px;background:#bae4e1"></div>
<div class="t" style="left:1407.65px;top:699.91px;font-size:10px;font-weight:700;color:#1a202c;">30</div>
<div class="t" style="left:140.75px;top:790.78px;font-size:10px;font-weight:400;color:#4a5568;letter-spacing:0.338px;">Vendredi</div>
<div class="abs" style="left:192.00px;top:751.48px;width:87.57px;height:87.57px;border-radius:4px;background:#eff9f8"></div>
<div class="t" style="left:233.00px;top:790.48px;font-size:10px;font-weight:700;color:#6e7b91;">5</div>
<div class="abs" style="left:282.57px;top:751.48px;width:87.57px;height:87.57px;border-radius:4px;background:#eff9f8"></div>
<div class="t" style="left:323.58px;top:790.48px;font-size:10px;font-weight:700;color:#6e7b91;">8</div>
<div class="abs" style="left:373.14px;top:751.48px;width:87.57px;height:87.57px;border-radius:4px;background:#d7f0ee"></div>
<div class="t" style="left:411.37px;top:790.48px;font-size:10px;font-weight:400;color:#3f4a5a;-webkit-text-stroke:0.3px #3f4a5a;">20</div>
<div class="abs" style="left:463.71px;top:751.48px;width:87.57px;height:87.57px;border-radius:4px;background:#bae4e1"></div>
<div class="t" style="left:501.94px;top:790.48px;font-size:10px;font-weight:700;color:#1a202c;">35</div>
<div class="abs" style="left:554.28px;top:751.48px;width:87.57px;height:87.57px;border-radius:4px;background:#60c1bc"></div>
<div class="t" style="left:592.51px;top:790.48px;font-size:10px;font-weight:700;color:#ffffff;">52</div>
<div class="abs" style="left:644.86px;top:751.48px;width:87.57px;height:87.57px;border-radius:4px;background:#60c1bc"></div>
<div class="t" style="left:683.08px;top:790.48px;font-size:10px;font-weight:700;color:#ffffff;">58</div>
<div class="abs" style="left:735.43px;top:751.48px;width:87.57px;height:87.57px;border-radius:4px;background:#88d1cd"></div>
<div class="t" style="left:773.65px;top:790.48px;font-size:10px;font-weight:700;color:#ffffff;">42</div>
<div class="abs" style="left:826.00px;top:751.48px;width:87.57px;height:87.57px;border-radius:4px;background:#bae4e1"></div>
<div class="t" style="left:864.22px;top:790.48px;font-size:10px;font-weight:700;color:#1a202c;">25</div>
<div class="abs" style="left:916.57px;top:751.48px;width:87.57px;height:87.57px;border-radius:4px;background:#d7f0ee"></div>
<div class="t" style="left:955.24px;top:790.48px;font-size:10px;font-weight:400;color:#3f4a5a;letter-spacing:-0.890px;-webkit-text-stroke:0.3px #3f4a5a;">14</div>
<div class="abs" style="left:1007.14px;top:751.48px;width:87.57px;height:87.57px;border-radius:4px;background:#bae4e1"></div>
<div class="t" style="left:1045.36px;top:790.48px;font-size:10px;font-weight:700;color:#1a202c;">25</div>
<div class="abs" style="left:1097.71px;top:751.48px;width:87.57px;height:87.57px;border-radius:4px;background:#88d1cd"></div>
<div class="t" style="left:1135.93px;top:790.48px;font-size:10px;font-weight:700;color:#ffffff;">42</div>
<div class="abs" style="left:1188.28px;top:751.48px;width:87.57px;height:87.57px;border-radius:4px;background:#60c1bc"></div>
<div class="t" style="left:1226.50px;top:790.48px;font-size:10px;font-weight:700;color:#ffffff;">55</div>
<div class="abs" style="left:1278.85px;top:751.48px;width:87.57px;height:87.57px;border-radius:4px;background:#60c1bc"></div>
<div class="t" style="left:1317.08px;top:790.48px;font-size:10px;font-weight:700;color:#ffffff;">50</div>
<div class="abs" style="left:1369.42px;top:751.48px;width:87.57px;height:87.57px;border-radius:4px;background:#bae4e1"></div>
<div class="t" style="left:1407.65px;top:790.48px;font-size:10px;font-weight:700;color:#1a202c;">35</div>
<div class="t" style="left:146.66px;top:881.36px;font-size:10px;font-weight:400;color:#4a5568;letter-spacing:0.407px;">Samedi</div>
<div class="abs" style="left:192.00px;top:842.06px;width:87.57px;height:87.57px;border-radius:4px;background:#eff9f8"></div>
<div class="t" style="left:233.00px;top:881.06px;font-size:10px;font-weight:700;color:#6e7b91;">6</div>
<div class="abs" style="left:282.57px;top:842.06px;width:87.57px;height:87.57px;border-radius:4px;background:#eff9f8"></div>
<div class="t" style="left:321.24px;top:881.06px;font-size:10px;font-weight:700;color:#6e7b91;letter-spacing:-0.890px;">10</div>
<div class="abs" style="left:373.14px;top:842.06px;width:87.57px;height:87.57px;border-radius:4px;background:#bae4e1"></div>
<div class="t" style="left:411.37px;top:881.06px;font-size:10px;font-weight:700;color:#1a202c;">25</div>
<div class="abs" style="left:463.71px;top:842.06px;width:87.57px;height:87.57px;border-radius:4px;background:#88d1cd"></div>
<div class="t" style="left:501.94px;top:881.06px;font-size:10px;font-weight:700;color:#ffffff;">42</div>
<div class="abs" style="left:554.28px;top:842.06px;width:87.57px;height:87.57px;border-radius:4px;background:#60c1bc"></div>
<div class="t" style="left:592.51px;top:881.06px;font-size:10px;font-weight:700;color:#ffffff;">58</div>
<div class="abs" style="left:644.86px;top:842.06px;width:87.57px;height:87.57px;border-radius:4px;background:#38b2ac"></div>
<div class="t" style="left:683.08px;top:881.06px;font-size:10px;font-weight:700;color:#ffffff;">65</div>
<div class="abs" style="left:735.43px;top:842.06px;width:87.57px;height:87.57px;border-radius:4px;background:#60c1bc"></div>
<div class="t" style="left:773.65px;top:881.06px;font-size:10px;font-weight:700;color:#ffffff;">48</div>
<div class="abs" style="left:826.00px;top:842.06px;width:87.57px;height:87.57px;border-radius:4px;background:#bae4e1"></div>
<div class="t" style="left:864.22px;top:881.06px;font-size:10px;font-weight:700;color:#1a202c;">30</div>
<div class="abs" style="left:916.57px;top:842.06px;width:87.57px;height:87.57px;border-radius:4px;background:#d7f0ee"></div>
<div class="t" style="left:955.24px;top:881.06px;font-size:10px;font-weight:400;color:#3f4a5a;letter-spacing:-0.890px;-webkit-text-stroke:0.3px #3f4a5a;">18</div>
<div class="abs" style="left:1007.14px;top:842.06px;width:87.57px;height:87.57px;border-radius:4px;background:#bae4e1"></div>
<div class="t" style="left:1045.36px;top:881.06px;font-size:10px;font-weight:700;color:#1a202c;">30</div>
<div class="abs" style="left:1097.71px;top:842.06px;width:87.57px;height:87.57px;border-radius:4px;background:#60c1bc"></div>
<div class="t" style="left:1135.93px;top:881.06px;font-size:10px;font-weight:700;color:#ffffff;">48</div>
<div class="abs" style="left:1188.28px;top:842.06px;width:87.57px;height:87.57px;border-radius:4px;background:#38b2ac"></div>
<div class="t" style="left:1226.50px;top:881.06px;font-size:10px;font-weight:700;color:#ffffff;">62</div>
<div class="abs" style="left:1278.85px;top:842.06px;width:87.57px;height:87.57px;border-radius:4px;background:#60c1bc"></div>
<div class="t" style="left:1317.08px;top:881.06px;font-size:10px;font-weight:700;color:#ffffff;">58</div>
<div class="abs" style="left:1369.42px;top:842.06px;width:87.57px;height:87.57px;border-radius:4px;background:#88d1cd"></div>
<div class="t" style="left:1407.65px;top:881.06px;font-size:10px;font-weight:700;color:#ffffff;">42</div>
<div class="t" style="left:134.88px;top:971.93px;font-size:10px;font-weight:400;color:#4a5568;letter-spacing:0.386px;">Dimanche</div>
<div class="abs" style="left:192.00px;top:932.63px;width:87.57px;height:87.57px;border-radius:4px;background:#eff9f8"></div>
<div class="t" style="left:233.00px;top:971.63px;font-size:10px;font-weight:700;color:#6e7b91;">4</div>
<div class="abs" style="left:282.57px;top:932.63px;width:87.57px;height:87.57px;border-radius:4px;background:#eff9f8"></div>
<div class="t" style="left:323.58px;top:971.63px;font-size:10px;font-weight:700;color:#6e7b91;">6</div>
<div class="abs" style="left:373.14px;top:932.63px;width:87.57px;height:87.57px;border-radius:4px;background:#d7f0ee"></div>
<div class="t" style="left:411.81px;top:971.63px;font-size:10px;font-weight:400;color:#3f4a5a;letter-spacing:-0.890px;-webkit-text-stroke:0.3px #3f4a5a;">18</div>
<div class="abs" style="left:463.71px;top:932.63px;width:87.57px;height:87.57px;border-radius:4px;background:#bae4e1"></div>
<div class="t" style="left:501.94px;top:971.63px;font-size:10px;font-weight:700;color:#1a202c;">30</div>
<div class="abs" style="left:554.28px;top:932.63px;width:87.57px;height:87.57px;border-radius:4px;background:#88d1cd"></div>
<div class="t" style="left:592.51px;top:971.63px;font-size:10px;font-weight:700;color:#ffffff;">45</div>
<div class="abs" style="left:644.86px;top:932.63px;width:87.57px;height:87.57px;border-radius:4px;background:#60c1bc"></div>
<div class="t" style="left:683.08px;top:971.63px;font-size:10px;font-weight:700;color:#ffffff;">50</div>
<div class="abs" style="left:735.43px;top:932.63px;width:87.57px;height:87.57px;border-radius:4px;background:#bae4e1"></div>
<div class="t" style="left:773.65px;top:971.63px;font-size:10px;font-weight:700;color:#1a202c;">35</div>
<div class="abs" style="left:826.00px;top:932.63px;width:87.57px;height:87.57px;border-radius:4px;background:#d7f0ee"></div>
<div class="t" style="left:864.22px;top:971.63px;font-size:10px;font-weight:400;color:#3f4a5a;-webkit-text-stroke:0.3px #3f4a5a;">22</div>
<div class="abs" style="left:916.57px;top:932.63px;width:87.57px;height:87.57px;border-radius:4px;background:#d7f0ee"></div>
<div class="t" style="left:955.24px;top:971.63px;font-size:10px;font-weight:400;color:#3f4a5a;letter-spacing:-0.890px;-webkit-text-stroke:0.3px #3f4a5a;">12</div>
<div class="abs" style="left:1007.14px;top:932.63px;width:87.57px;height:87.57px;border-radius:4px;background:#d7f0ee"></div>
<div class="t" style="left:1045.36px;top:971.63px;font-size:10px;font-weight:400;color:#3f4a5a;-webkit-text-stroke:0.3px #3f4a5a;">22</div>
<div class="abs" style="left:1097.71px;top:932.63px;width:87.57px;height:87.57px;border-radius:4px;background:#88d1cd"></div>
<div class="t" style="left:1135.93px;top:971.63px;font-size:10px;font-weight:700;color:#ffffff;">38</div>
<div class="abs" style="left:1188.28px;top:932.63px;width:87.57px;height:87.57px;border-radius:4px;background:#60c1bc"></div>
<div class="t" style="left:1226.50px;top:971.63px;font-size:10px;font-weight:700;color:#ffffff;">50</div>
<div class="abs" style="left:1278.85px;top:932.63px;width:87.57px;height:87.57px;border-radius:4px;background:#88d1cd"></div>
<div class="t" style="left:1317.08px;top:971.63px;font-size:10px;font-weight:700;color:#ffffff;">45</div>
<div class="abs" style="left:1369.42px;top:932.63px;width:87.57px;height:87.57px;border-radius:4px;background:#bae4e1"></div>
<div class="t" style="left:1407.65px;top:971.63px;font-size:10px;font-weight:700;color:#1a202c;">32</div>
<div class="abs" style="left:109px;top:1020px;width:1348px;height:6px;background:#e2e8f0"></div>
<div class="card" style="left:90px;top:1067px;width:682.4px;height:400px"></div>
<svg class="abs" style="left:108.8px;top:1089.8px" width="14.4" height="12.3" viewBox="0 0 29 25" preserveAspectRatio="none"><path d="M1.500 0v21.500a2 2 0 0 0 2 2H28.500" fill="none" stroke="#38b2ac" stroke-width="3" stroke-linecap="round"/><path d="M7 18.500V11.500L11 6.500l3.500 3L18 4.500l3 2.500L26 9.500v9z" fill="#38b2ac" stroke="#38b2ac" stroke-width="1.500" stroke-linejoin="round"/></svg>
<div class="t" style="left:130.30px;top:1088.52px;font-size:14.5px;font-weight:700;color:#1a202c;letter-spacing:0.502px;">Volume par créneau (courbe)</div>
<div class="abs" style="left:325.2px;top:1133px;width:34.0px;height:11.600px;background:#e5e5e5;border:2px solid #38b2ac"></div>
<div class="t" style="left:363.40px;top:1133.17px;font-size:10.5px;font-weight:400;color:#666e7a;letter-spacing:0.228px;">Vocal</div>
<div class="abs" style="left:397.4px;top:1133px;width:33.8px;height:11.600px;background:#e5e5e5;border:2px solid #ed8936"></div>
<div class="t" style="left:435.10px;top:1133.17px;font-size:10.5px;font-weight:400;color:#666e7a;letter-spacing:0.223px;">Tactile</div>
<div class="abs" style="left:473.4px;top:1133px;width:34.5px;height:11.600px;background:#e5e5e5;border:2px solid #805ad5"></div>
<div class="t" style="left:511.70px;top:1133.17px;font-size:10.5px;font-weight:400;color:#666e7a;letter-spacing:-0.197px;">Mixte</div>
<svg class="abs" style="left:0;top:0" width="1564" height="1189" viewBox="0 0 1564 1189"><rect x="131" y="1151" width="1" height="60" fill="#3d4555"/><rect x="177" y="1151" width="1" height="60" fill="#3d4555"/><rect x="224" y="1151" width="1" height="60" fill="#3d4555"/><rect x="271" y="1151" width="1" height="60" fill="#3d4555"/><rect x="317" y="1151" width="1" height="60" fill="#3d4555"/><rect x="364" y="1151" width="1" height="60" fill="#3d4555"/><rect x="410" y="1151" width="1" height="60" fill="#3d4555"/><rect x="457" y="1151" width="1" height="60" fill="#3d4555"/><rect x="503" y="1151" width="1" height="60" fill="#3d4555"/><rect x="550" y="1151" width="1" height="60" fill="#3d4555"/><rect x="596" y="1151" width="1" height="60" fill="#3d4555"/><rect x="643" y="1151" width="1" height="60" fill="#3d4555"/><rect x="690" y="1151" width="1" height="60" fill="#3d4555"/><rect x="736" y="1151" width="1" height="60" fill="#3d4555"/><rect x="125" y="1151" width="612" height="1" fill="#3d4555"/><rect x="125" y="1178" width="612" height="1" fill="#3d4555"/><path d="M131.40 1318.00C150.02 1302.43 162.54 1297.48 177.95 1279.08C199.79 1253.00 202.67 1232.88 224.51 1206.80C239.92 1188.40 250.93 1171.49 271.06 1167.88C288.18 1164.81 301.05 1178.25 317.62 1190.12C338.29 1204.94 344.46 1218.12 364.17 1234.60C381.70 1249.26 391.13 1256.26 410.72 1267.96C428.37 1278.50 437.96 1287.89 457.28 1290.20C475.20 1292.34 488.49 1289.16 503.83 1279.08C525.74 1264.69 531.76 1249.06 550.39 1229.04C569.01 1209.02 575.04 1188.16 596.94 1179.00C612.28 1172.59 626.54 1182.02 643.49 1190.12C663.78 1199.81 671.96 1209.44 690.05 1223.48C709.21 1238.35 717.98 1246.83 736.60 1262.40" fill="none" stroke="#38b2ac" stroke-width="2.400"/><circle cx="271.06" cy="1167.88" r="2.200" fill="#7fd0cb" stroke="#38b2ac" stroke-width="0.800"/><circle cx="317.62" cy="1190.12" r="2.200" fill="#7fd0cb" stroke="#38b2ac" stroke-width="0.800"/><circle cx="596.94" cy="1179.00" r="2.200" fill="#7fd0cb" stroke="#38b2ac" stroke-width="0.800"/><circle cx="643.49" cy="1190.12" r="2.200" fill="#7fd0cb" stroke="#38b2ac" stroke-width="0.800"/></svg>
<div class="t" style="left:111.70px;top:1146.27px;font-size:10.5px;font-weight:400;color:#a0aec0;letter-spacing:-0.479px;">35</div>
<div class="t" style="left:111.70px;top:1174.07px;font-size:10.5px;font-weight:400;color:#a0aec0;letter-spacing:-0.479px;">30</div>
<div class="card" style="left:794px;top:1067px;width:682.3px;height:400px"></div>
<svg class="abs" style="left:812.8px;top:1088.8px" width="16.2" height="14" viewBox="0 0 32 26" preserveAspectRatio="none"><path d="M8 0h16v3.500h7.500v3c0 4.500-3.500 8-8.200 8.500-1.200 2-3 3.300-5 3.800V22.500h4.500a1.500 1.500 0 0 1 1.500 1.500v2H7.700v-2a1.500 1.500 0 0 1 1.500-1.500h4.500V18.800c-2-.5-3.800-1.800-5-3.800C4 14.500.5 11 .5 6.500v-3H8z" fill="#38b2ac"/><path d="M3.300 6.300H8c.1 2 .4 4 1 5.600C5.800 11.300 3.500 9.300 3.300 6.300zM28.700 6.300H24c-.1 2-.4 4-1 5.600 3.200-.6 5.500-2.600 5.700-5.600z" fill="#fff"/></svg>
<div class="t" style="left:835.60px;top:1088.52px;font-size:14.5px;font-weight:700;color:#1a202c;letter-spacing:0.311px;">Top articles par créneau</div>
<div class="abs" style="left:813px;top:1126px;width:644px;height:42px;background:#f7fafc"></div>
<div class="abs" style="left:813px;top:1168px;width:644px;height:1px;background:#e2e8f0"></div>
<div class="t" style="left:825.60px;top:1140.83px;font-size:11px;font-weight:700;color:#4a5568;letter-spacing:-0.316px;">CRÉNEAU</div>
<div class="t" style="left:946.60px;top:1140.83px;font-size:11px;font-weight:700;color:#4a5568;letter-spacing:-0.622px;">TOP 1</div>
<div class="t" style="left:1147.50px;top:1140.83px;font-size:11px;font-weight:700;color:#4a5568;letter-spacing:-0.147px;">TOP 2</div>
<div class="t" style="left:1331.60px;top:1140.83px;font-size:11px;font-weight:700;color:#4a5568;letter-spacing:0.053px;">TOP 3</div>
<div class="abs" style="left:826px;top:1181px;width:53.300px;height:20px;border-radius:10px;background:#d7f0ee"></div>
<div class="t" style="left:835.55px;top:1185.36px;font-size:9.5px;font-weight:700;color:#38b2ac;letter-spacing:-0.513px;">11h-12h</div>
<div class="t" style="left:946.60px;top:1183.45px;font-size:13px;font-weight:400;color:#1a202c;letter-spacing:0.566px;">Salade César</div>
<div class="t" style="left:1147.50px;top:1183.45px;font-size:13px;font-weight:400;color:#1a202c;letter-spacing:0.470px;">Wrap Poulet</div>
<div class="t" style="left:1331.60px;top:1183.45px;font-size:13px;font-weight:400;color:#1a202c;letter-spacing:0.697px;">Smoothie</div>
</body>
</html>
